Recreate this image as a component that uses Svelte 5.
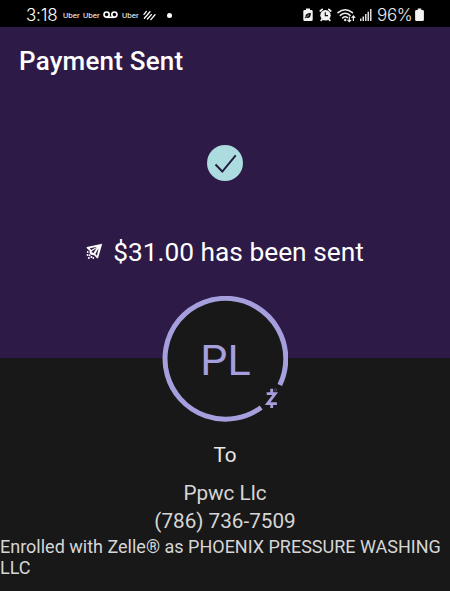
<script lang="ts">
	let amount = '$31.00';
	let initials = 'PL';
	let name = 'Ppwc Llc';
	let phone = '(786) 736-7509';
	let enrolledAs = 'PHOENIX PRESSURE WASHING LLC';
</script>

<div class="screen">
	<header class="status-bar">
		<div class="status-left">
			<span class="time">3:18</span>
			<span class="app">Uber</span>
			<span class="app">Uber</span>
			<svg class="voicemail" width="15" height="8" viewBox="0 0 15 8">
				<g fill="none" stroke="#fff" stroke-width="1.6">
					<circle cx="3.6" cy="3.6" r="2.6" />
					<circle cx="11.4" cy="3.6" r="2.6" />
					<path d="M3.6 6.3h7.8" />
				</g>
			</svg>
			<span class="app">Uber</span>
			<svg class="stripes" width="13" height="11" viewBox="0 0 13 11">
				<g stroke="#fff" stroke-width="1.3" stroke-linecap="round">
					<path d="M1 4.4L3.4 1.4M1.4 8.2L7 1.8M4.4 9L8.4 4.6M7.8 9.6L12 4.8" />
				</g>
			</svg>
			<span class="dot"></span>
		</div>

		<div class="status-right">
			<svg class="saver" width="10" height="14" viewBox="0 0 10 14">
				<path fill="#f2f2f2" d="M3 0.5h4v1.4h1.3q1.4 0 1.4 1.4v8.4q0 1.4-1.4 1.4H1.7q-1.4 0-1.4-1.4V3.3q0-1.4 1.4-1.4H3z" />
				<path fill="#111" d="M7.9 4.8Q8 10 4.6 10 3.5 10 3 9.5L2 10.5 1.7 9.7 2.4 8.7Q2 5.3 7.9 4.8z" />
				<path stroke="#f2f2f2" stroke-width="0.6" d="M3.3 9L6 6.8" />
			</svg>
			<svg class="alarm" width="13" height="14" viewBox="0 0 13 14">
				<circle cx="6.5" cy="7.2" r="5.2" fill="#f2f2f2" />
				<g fill="none" stroke="#f2f2f2" stroke-width="1.8" stroke-linecap="round">
					<path d="M1.3 3L3.2 1.4M11.7 3L9.8 1.4M2.2 12.3L3.3 11M10.8 12.3L9.7 11" />
				</g>
				<path fill="none" stroke="#111" stroke-width="1.2" d="M6.3 4.3V7.6H9" />
			</svg>
			<svg class="wifi" width="19" height="15" viewBox="0 0 19 15">
				<g fill="none" stroke="#eee" stroke-width="1.5" stroke-linecap="round">
					<path d="M1 4.7Q8.2-1.3 15.4 4.7" />
					<path d="M3.3 7.4Q8.2 3.1 13.1 7.4" />
					<path d="M5.6 9.9Q8.2 7.7 10.4 9.6" />
				</g>
				<circle cx="8.2" cy="12" r="1.2" fill="#eee" />
				<path fill="none" stroke="#eee" stroke-width="1.2" d="M12.3 8.5V13.6M10.5 11.8L12.3 13.7 14.1 11.8M16.4 13V8M14.6 9.8L16.4 7.9 18.2 9.8" />
			</svg>
			<svg class="signal" width="12" height="12" viewBox="0 0 12 12">
				<g fill="#ddd">
					<rect x="0" y="9.5" width="1.5" height="2.5" />
					<rect x="2.5" y="7.5" width="1.5" height="4.5" />
					<rect x="5" y="5" width="1.5" height="7" />
					<rect x="7.5" y="2.7" width="1.5" height="9.3" />
					<rect x="10" y="0" width="1.5" height="12" />
				</g>
			</svg>
			<span class="percent">96%</span>
			<svg class="battery" width="9" height="14" viewBox="0 0 9 14">
				<path fill="#f2f2f2" d="M2.7 0.5h3.6v1.4h1.2q1.4 0 1.4 1.4v8.4q0 1.4-1.4 1.4H1.5q-1.4 0-1.4-1.4V3.3q0-1.4 1.4-1.4h1.2z" />
			</svg>
		</div>
	</header>

	<section class="hero">
		<h1>Payment Sent</h1>
		<svg class="check" width="36" height="36" viewBox="0 0 36 36">
			<circle cx="18" cy="18" r="18" fill="#acdbe0" />
			<path d="M8.5 19.5L15.3 26.5L28.7 10.3" fill="none" stroke="#24183f" stroke-width="1.9" />
		</svg>
		<p class="amount">
			<svg width="17" height="17" viewBox="0 0 17 17">
				<path
					fill="#fff"
					fill-rule="evenodd"
					d="M16.2 0.8L1 4.1Q0.4 4.5 0.8 5.2L3.6 7.8V10.2L5 11.8 8.2 12.2 11 15.2Q11.800 15.600 12.200 14.800zM3.800 5.300L11.300 3.700 5.100 7zM9.300 11L12.500 5.400 11 12.700zM5.400 8.600L10.600 5.100 7.300 10.300z"
				/>
				<g fill="#fff">
					<circle cx="1.700" cy="9" r="0.900" />
					<circle cx="1.500" cy="12" r="0.900" />
					<circle cx="3.500" cy="12.300" r="1" />
					<circle cx="2.800" cy="15" r="1" />
					<circle cx="5.400" cy="14" r="1" />
					<circle cx="7.300" cy="15" r="0.900" />
				</g>
			</svg>
			<span>{amount} has been sent</span>
		</p>
	</section>

	<section class="recipient">
		<div class="avatar">
			<svg width="126" height="126" viewBox="0 0 126 126">
				<circle cx="63" cy="63" r="62" fill="#181818" />
				<path d="M117.8 89A60.4 60.4 0 1 0 99.2 111.4" fill="none" stroke="#a69fdd" stroke-width="5" />
				<circle cx="109.5" cy="102.5" r="13" fill="#181818" />
				<g fill="none" stroke="#a69fdd" stroke-width="2.8">
					<path d="M104.7 97.7H113.2L105.6 107.7H114.9" />
					<path d="M109.7 92.8V97.5M109.7 107.7V112" />
				</g>
				<circle cx="113.5" cy="94" r="1.3" fill="none" stroke="#55515f" stroke-width="0.8" />
			</svg>
			<span class="initials">{initials}</span>
		</div>
		<p class="to">To</p>
		<p class="name">{name}</p>
		<p class="phone">{phone}</p>
		<p class="enrolled">Enrolled with Zelle® as {enrolledAs}</p>
	</section>
</div>

<style>
	:global(body) {
		background: #181818;
	}

	.screen {
		width: 450px;
		height: 591px;
		overflow: hidden;
		background: #181818;
		font-family: Roboto, sans-serif;
		color: #fff;
	}

	h1,
	p {
		margin: 0;
		font-weight: 400;
	}

	svg {
		display: block;
		flex: none;
	}

	.status-bar {
		display: flex;
		justify-content: space-between;
		height: 27px;
		padding: 0 26px;
		box-sizing: border-box;
		background: #000;
	}

	.status-left,
	.status-right {
		display: flex;
		align-items: center;
		height: 30px;
	}

	.time {
		width: 37px;
		font-family: Inter, Roboto, sans-serif;
		font-size: 17px;
		font-weight: 300;
		letter-spacing: -0.2px;
	}

	.app {
		width: 20px;
		font-size: 8px;
		color: #fff;
	}

	.voicemail {
		margin-right: 4px;
	}

	.stripes {
		margin: 0 11px 0 1px;
	}

	.dot {
		width: 5px;
		height: 5px;
		border-radius: 50%;
		background: #fff;
	}

	.saver {
		margin-right: 6px;
	}

	.alarm {
		margin-right: 5px;
	}

	.wifi {
		margin-right: 4px;
	}

	.signal {
		margin-right: 5px;
	}

	.percent {
		width: 38px;
		font-family: Inter, Roboto, sans-serif;
		font-size: 17px;
		font-weight: 300;
		letter-spacing: -0.3px;
		color: #eee;
	}

	.hero {
		display: flex;
		flex-direction: column;
		align-items: center;
		height: 331px;
		background: #2e1a46;
	}

	h1 {
		align-self: flex-start;
		margin: 19px 0 0 19px;
		font-size: 26px;
		font-weight: 500;
		line-height: 30px;
		letter-spacing: 0.2px;
	}

	.check {
		margin-top: 69px;
	}

	.amount {
		display: flex;
		align-items: center;
		gap: 10px;
		margin-top: 55px;
		font-size: 26.3px;
		line-height: 32px;
	}

	.amount svg {
		margin-top: -2px;
	}

	.recipient {
		display: flex;
		flex-direction: column;
		align-items: center;
		color: #d6d6d6;
	}

	.avatar {
		position: relative;
		width: 126px;
		height: 126px;
		margin-top: -62px;
	}

	.initials {
		position: absolute;
		inset: 0;
		display: flex;
		align-items: center;
		justify-content: center;
		padding: 2px 0 0 1px;
		color: #a69fdd;
		font-size: 43px;
	}

	.to {
		margin-top: 20px;
		font-size: 20.7px;
		line-height: 26px;
		color: #e8e8e8;
	}

	.name {
		margin-top: 12px;
		font-size: 20.7px;
		line-height: 26px;
	}

	.phone {
		margin-top: 2px;
		font-size: 20.7px;
		line-height: 26px;
	}

	.enrolled {
		align-self: stretch;
		margin-top: 2px;
		font-size: 18px;
		line-height: 21px;
	}
</style>
